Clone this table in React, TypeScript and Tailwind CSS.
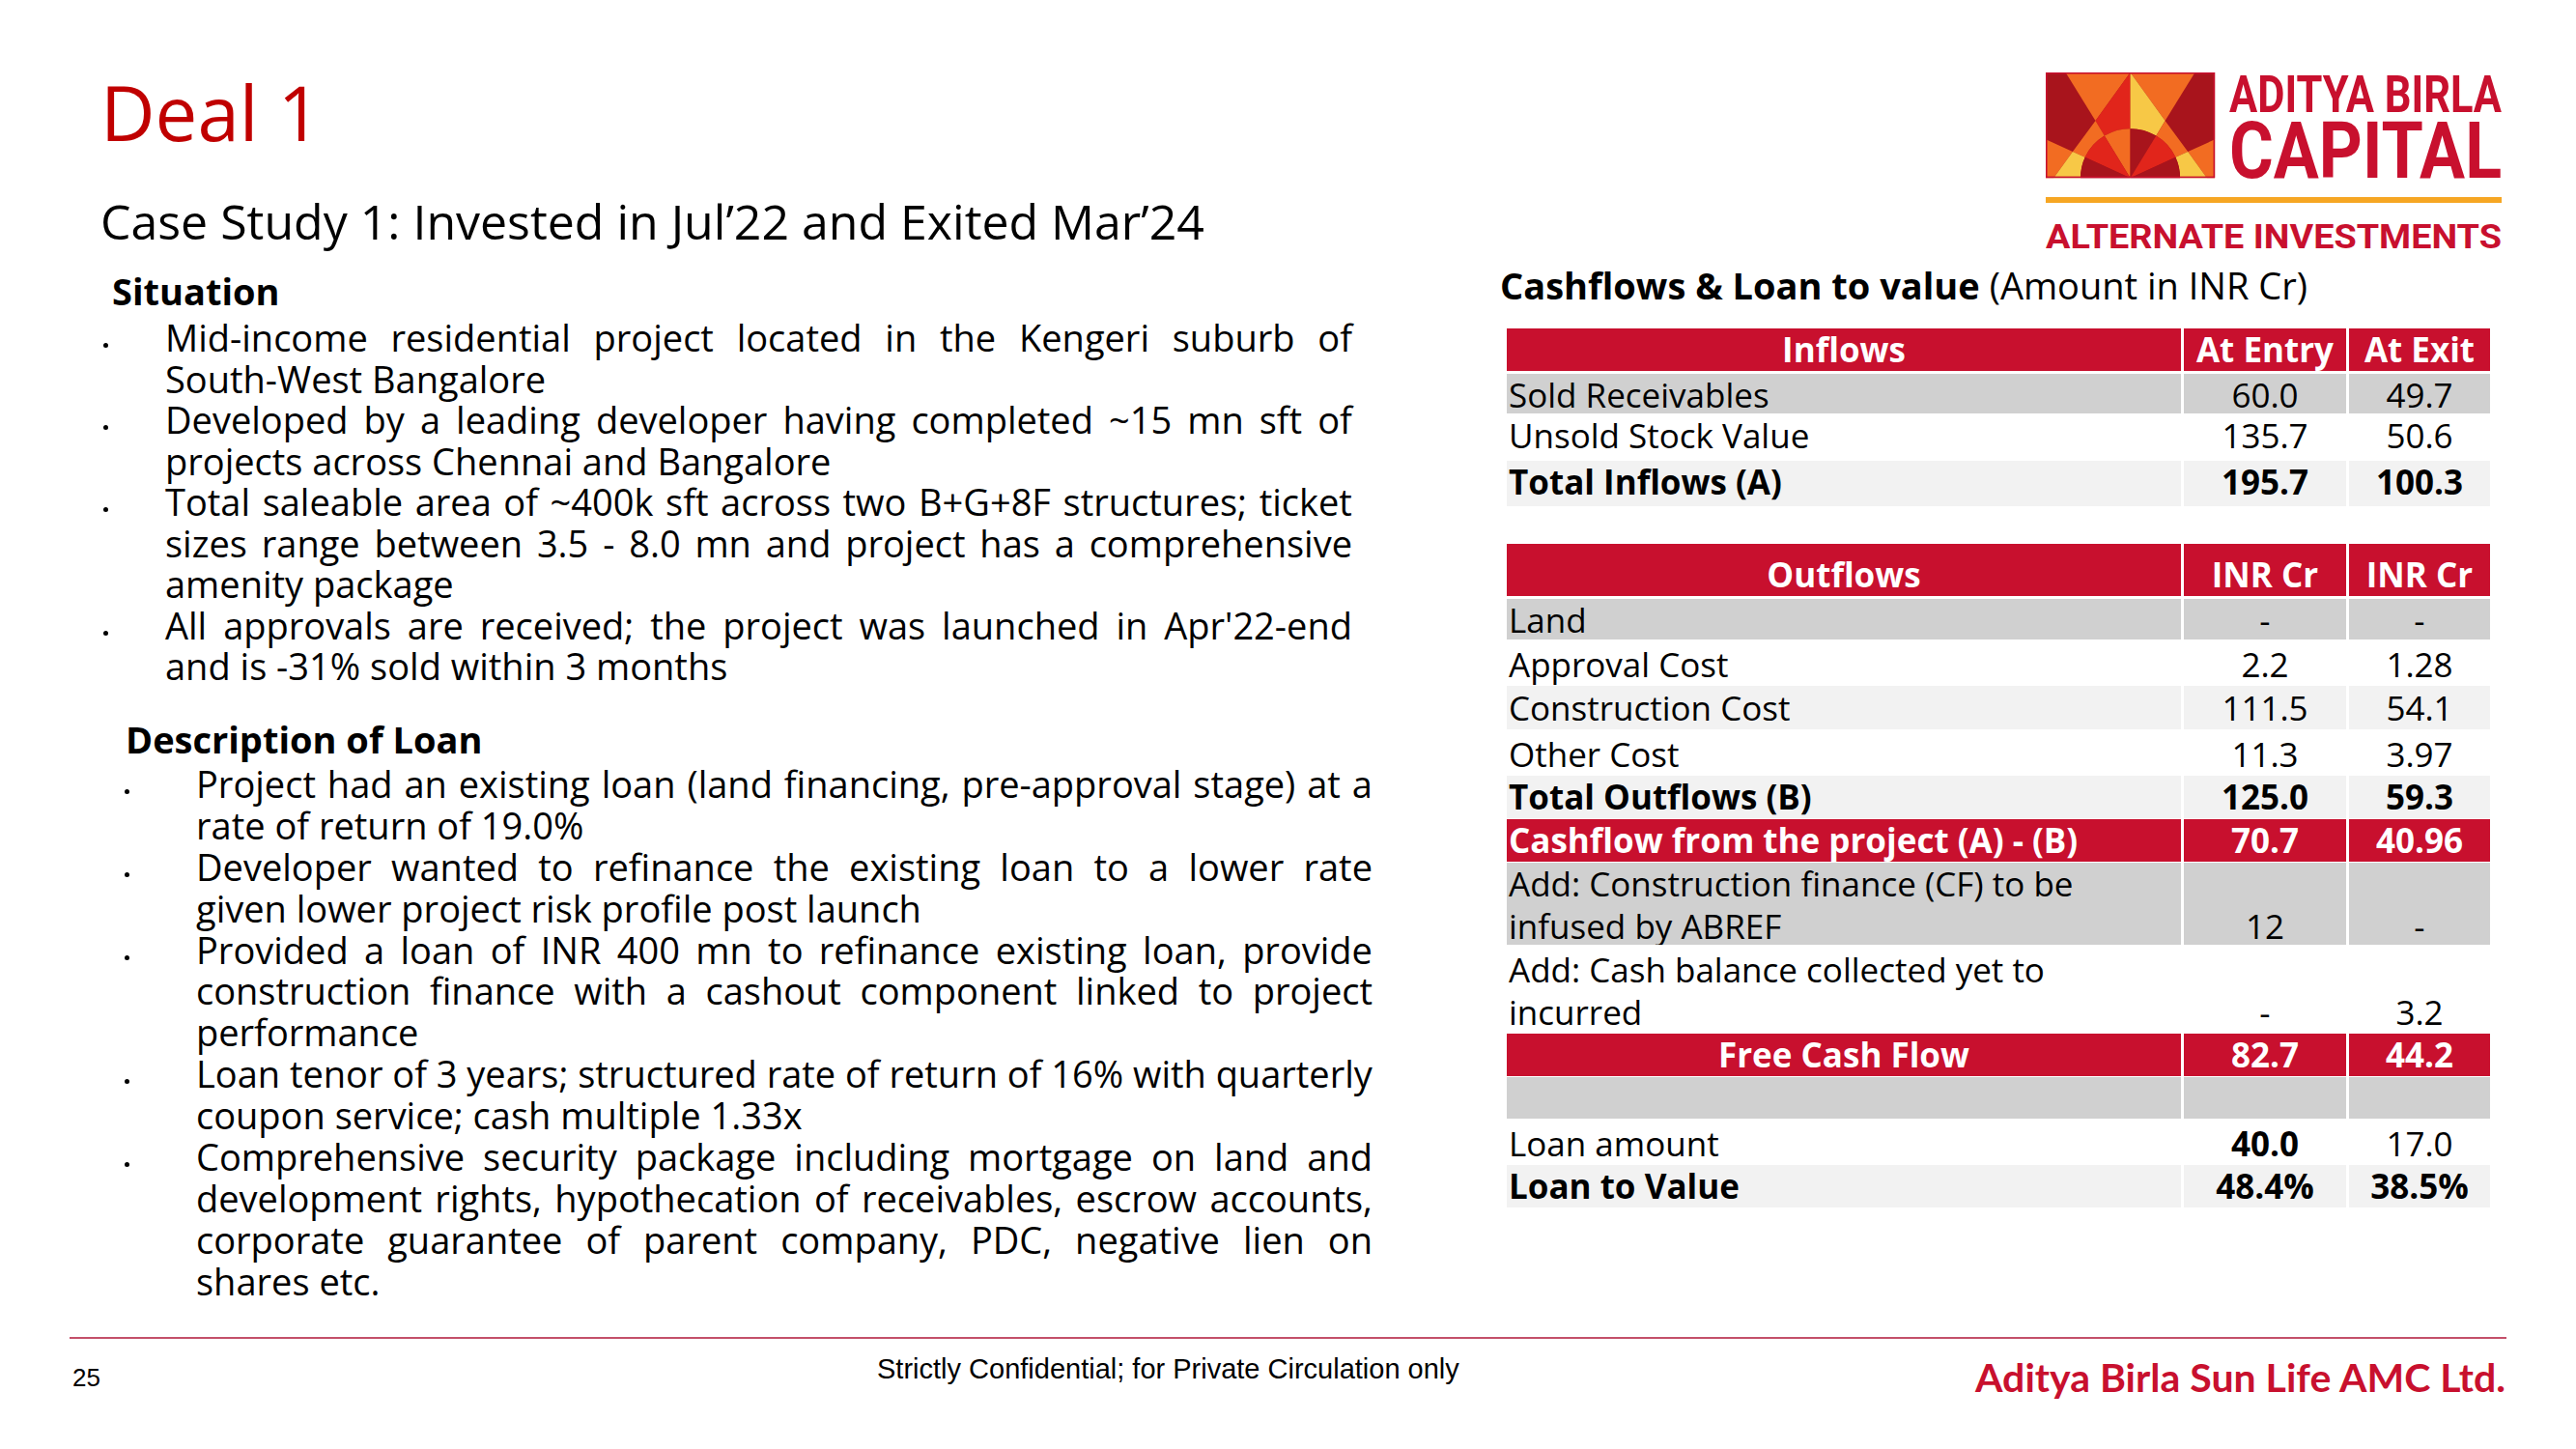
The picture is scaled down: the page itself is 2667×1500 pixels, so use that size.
import React from "react";

const Justified = ({ text }: { text: string }) => (
  <div className="flex justify-between gap-x-[9px] whitespace-nowrap">
    {text.split(" ").map((w, i) => (
      <span key={i}>{w}</span>
    ))}
  </div>
);

const Bullet = ({ lines, dotCol }: { lines: string[]; dotCol: string }) => (
  <div className="flex">
    <div className={dotCol + " shrink-0"}>
      <div className="w-[5px] h-[5px] rounded-full bg-black mt-[27px]" />
    </div>
    <div className="flex-1">
      {lines.map((l, i) =>
        i < lines.length - 1 ? (
          <Justified key={i} text={l} />
        ) : (
          <div key={i} className="whitespace-nowrap">
            {l}
          </div>
        )
      )}
    </div>
  </div>
);

type RowProps = {
  h: string;
  mt?: string;
  bg: string;
  c1?: React.ReactNode;
  c2?: React.ReactNode;
  c3?: React.ReactNode;
  tone?: string;
  c1Center?: boolean;
  b1?: boolean;
  b2?: boolean;
  b3?: boolean;
  pb?: string;
};

function Row({ h, mt = "", bg, c1, c2, c3, tone = "text-black", c1Center, b1, b2, b3, pb = "" }: RowProps) {
  return (
    <div className={`grid grid-cols-[698px_168px_146px] gap-x-[3px] ${h} ${mt} ${tone}`}>
      <div className={`${bg} ${pb} flex items-end ${c1Center ? "justify-center" : "pl-[2px]"} ${b1 ? "font-bold" : ""}`}>{c1}</div>
      <div className={`${bg} ${pb} flex items-end justify-center ${b2 ? "font-bold" : ""}`}>{c2}</div>
      <div className={`${bg} ${pb} flex items-end justify-center ${b3 ? "font-bold" : ""}`}>{c3}</div>
    </div>
  );
}

const DR = "#a8141c";
const RD = "#e1251b";
const OR = "#f26c22";
const YE = "#f7c846";

function Logo() {
  return (
    <svg width="472" height="186" viewBox="0 0 472 186">
      <g transform="scale(1.03 1.02)">
        <rect x="0" y="0" width="170" height="107" fill={DR} />
        <path d="M0 0 L20 0 L50 49 L27.1 80.4 L0 68 Z" fill={DR} />
        <path d="M20 0 L85 0 L50 49 Z" fill={OR} />
        <path d="M85 0 L85 57 A50 50 0 0 0 59 64.3 L50 49 Z" fill={RD} />
        <path d="M50 49 L59 64.3 A50 50 0 0 0 39.5 86.1 L27.1 80.4 Z" fill={OR} />
        <path d="M0 68 L27.1 80.4 L8 107 L0 107 Z" fill={OR} />
        <path d="M27.1 80.4 L39.5 86.1 A50 50 0 0 0 35 107 L8 107 Z" fill={YE} />
        <path d="M85 107 L85 57 A50 50 0 0 0 59 64.3 Z" fill={OR} />
        <path d="M85 107 L59 64.3 A50 50 0 0 0 39.5 86.1 Z" fill={RD} />
        <path d="M85 107 L39.5 86.1 A50 50 0 0 0 35 107 Z" fill={DR} />
        <path d="M170 0 L150 0 L120 49 L142.9 80.4 L170 68 Z" fill={DR} />
        <path d="M150 0 L85 0 L120 49 Z" fill={OR} />
        <path d="M85 0 L85 57 A50 50 0 0 1 111 64.3 L120 49 Z" fill={YE} />
        <path d="M120 49 L111 64.3 A50 50 0 0 1 130.5 86.1 L142.9 80.4 Z" fill={OR} />
        <path d="M170 68 L142.9 80.4 L162 107 L170 107 Z" fill={OR} />
        <path d="M142.9 80.4 L130.5 86.1 A50 50 0 0 1 135 107 L162 107 Z" fill={YE} />
        <path d="M85 107 L85 57 A50 50 0 0 1 111 64.3 Z" fill={DR} />
        <path d="M85 107 L111 64.3 A50 50 0 0 1 130.5 86.1 Z" fill={RD} />
        <path d="M85 107 L130.5 86.1 A50 50 0 0 1 135 107 Z" fill={DR} />
        <rect x="0.75" y="0.75" width="168.5" height="105.5" fill="none" stroke="#c8102e" strokeWidth="1.5" />
      </g>
      <text x="190" y="41" fontFamily="Roboto, sans-serif" fontWeight="700" fontSize="54" textLength="282" lengthAdjust="spacingAndGlyphs" fill="#c8102e">
        ADITYA BIRLA
      </text>
      <text x="190" y="109" fontFamily="Roboto, sans-serif" fontWeight="700" fontSize="81" textLength="282" lengthAdjust="spacingAndGlyphs" fill="#c8102e">
        CAPITAL
      </text>
      <rect x="0" y="129" width="472" height="6" fill="#f6a623" />
      <text x="0" y="182" fontFamily="Roboto, sans-serif" fontWeight="700" fontSize="35" textLength="472" lengthAdjust="spacingAndGlyphs" fill="#c8102e">
        ALTERNATE INVESTMENTS
      </text>
    </svg>
  );
}

export default function App() {
  const RED = "bg-[#c8102e]";
  const GRAY = "bg-[#d0d0d0]";
  const LIGHT = "bg-[#f2f2f2]";
  const WHITE = "bg-white";
  return (
    <div className="w-[2667px] h-[1500px] bg-white overflow-hidden font-['Open_Sans',sans-serif] text-black">
      <div className="flex h-[1384px]">
        {/* Left column */}
        <div className="w-[1553px] shrink-0 pl-[104px] pt-[76px]">
          <div className="text-[78px] leading-[80px] text-[#c00000]">Deal 1</div>
          <div className="mt-[43px] text-[50px] leading-[60px] whitespace-nowrap">
            Case Study 1: Invested in Jul’22 and Exited Mar’24
          </div>
          <div className="mt-[21px] ml-[12px] text-[38px] leading-[43px] font-bold">Situation</div>
          <div className="mt-[5px] ml-[3px] w-[1293px] text-[38px] leading-[42.55px]">
            <Bullet
              dotCol="w-[64px]"
              lines={["Mid-income residential project located in the Kengeri suburb of", "South-West Bangalore"]}
            />
            <Bullet
              dotCol="w-[64px]"
              lines={["Developed by a leading developer having completed ~15 mn sft of", "projects across Chennai and Bangalore"]}
            />
            <Bullet
              dotCol="w-[64px]"
              lines={[
                "Total saleable area of ~400k sft across two B+G+8F structures; ticket",
                "sizes range between 3.5 - 8.0 mn and project has a comprehensive",
                "amenity package",
              ]}
            />
            <Bullet
              dotCol="w-[64px]"
              lines={["All approvals are received; the project was launched in Apr'22-end", "and is -31% sold within 3 months"]}
            />
          </div>
          <div className="mt-[33px] ml-[26px] text-[38px] leading-[43px] font-bold">Description of Loan</div>
          <div className="mt-[3px] ml-[25px] w-[1292px] text-[38px] leading-[42.9px]">
            <Bullet
              dotCol="w-[74px]"
              lines={["Project had an existing loan (land financing, pre-approval stage) at a", "rate of return of 19.0%"]}
            />
            <Bullet
              dotCol="w-[74px]"
              lines={["Developer wanted to refinance the existing loan to a lower rate", "given lower project risk profile post launch"]}
            />
            <Bullet
              dotCol="w-[74px]"
              lines={[
                "Provided a loan of INR 400 mn to refinance existing loan, provide",
                "construction finance with a cashout component linked to project",
                "performance",
              ]}
            />
            <Bullet
              dotCol="w-[74px]"
              lines={["Loan tenor of 3 years; structured rate of return of 16% with quarterly", "coupon service; cash multiple 1.33x"]}
            />
            <Bullet
              dotCol="w-[74px]"
              lines={[
                "Comprehensive security package including mortgage on land and",
                "development rights, hypothecation of receivables, escrow accounts,",
                "corporate guarantee of parent company, PDC, negative lien on",
                "shares etc.",
              ]}
            />
          </div>
        </div>

        {/* Right column */}
        <div className="flex-1 pt-[75px]">
          <div className="ml-[565px]">
            <Logo />
          </div>
          <div className="mt-[13px] text-[38px] leading-[43px] whitespace-nowrap">
            <span className="font-bold">Cashflows &amp; Loan to value</span> (Amount in INR Cr)
          </div>
          <div className="mt-[23px] ml-[7px] w-[1018px] text-[35px] leading-[44px]">
            <Row h="h-[39px]" bg={RED} tone="text-white" c1Center b1 b2 b3 c1="Inflows" c2="At Entry" c3="At Exit" />
            <Row h="h-[41px]" mt="mt-[8px]" pb="pb-[5px]" bg={GRAY} c1="Sold Receivables" c2="60.0" c3="49.7" />
            <Row h="h-[49px]" pb="pb-[4px]" bg={WHITE} c1="Unsold Stock Value" c2="135.7" c3="50.6" />
            <Row h="h-[43px]" pb="pb-[3px]" bg={LIGHT} b1 b2 b3 c1="Total Inflows (A)" c2="195.7" c3="100.3" />

            <Row h="h-[54px]" mt="mt-[43px]" bg={RED} tone="text-white" c1Center b1 b2 b3 c1="Outflows" c2="INR Cr" c3="INR Cr" />
            <Row h="h-[42px]" mt="mt-[3px]" bg={GRAY} c1="Land" c2="-" c3="-" />
            <Row h="h-[48px]" bg={WHITE} c1="Approval Cost" c2="2.2" c3="1.28" />
            <Row h="h-[45px]" bg={LIGHT} c1="Construction Cost" c2="111.5" c3="54.1" />
            <Row h="h-[48px]" bg={WHITE} c1="Other Cost" c2="11.3" c3="3.97" />
            <Row h="h-[43px]" bg={LIGHT} b1 b2 b3 c1="Total Outflows (B)" c2="125.0" c3="59.3" />
            <Row h="h-[43px]" mt="mt-[2px]" bg={RED} tone="text-white" b1 b2 b3 c1="Cashflow from the project (A) - (B)" c2="70.7" c3="40.96" />
            <Row
              h="h-[85px]"
              mt="mt-[2px]"
              bg={GRAY}
              c1={
                <div>
                  Add: Construction finance (CF) to be
                  <br />
                  infused by ABREF
                </div>
              }
              c2="12"
              c3="-"
            />
            <Row
              h="h-[92px]"
              bg={WHITE}
              c1={
                <div>
                  Add: Cash balance collected yet to
                  <br />
                  incurred
                </div>
              }
              c2="-"
              c3="3.2"
            />
            <Row h="h-[43px]" bg={RED} tone="text-white" c1Center b1 b2 b3 c1="Free Cash Flow" c2="82.7" c3="44.2" />
            <Row h="h-[43px]" mt="mt-[2px]" bg={GRAY} />
            <Row h="h-[48px]" bg={WHITE} b2 c1="Loan amount" c2="40.0" c3="17.0" />
            <Row h="h-[42px]" bg={LIGHT} b1 b2 b3 c1="Loan to Value" c2="48.4%" c3="38.5%" />
          </div>
        </div>
      </div>

      <div className="ml-[72px] w-[2523px] h-[2px] bg-[#c4506a]" />
      <div className="flex items-start">
        <div className="w-[908px] shrink-0 pl-[75px] mt-[25px] font-['Liberation_Sans',Arial,sans-serif] text-[26px] leading-[30px]">
          25
        </div>
        <div className="mt-[14px] font-['Liberation_Sans',Arial,sans-serif] text-[29px] leading-[34px] whitespace-nowrap">
          Strictly Confidential; for Private Circulation only
        </div>
        <div className="ml-auto mr-[73px] mt-[15px] font-['Lato',sans-serif] font-bold text-[41px] leading-[50px] text-[#c8102e] whitespace-nowrap">
          Aditya Birla Sun Life AMC Ltd.
        </div>
      </div>
    </div>
  );
}
